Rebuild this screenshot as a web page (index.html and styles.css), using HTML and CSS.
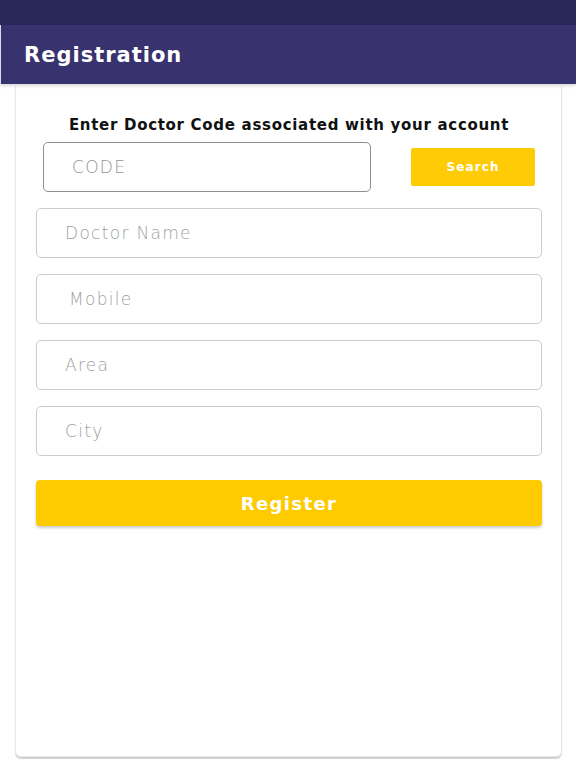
FILE: index.html
```html
<!DOCTYPE html>
<html>
<head>
<meta charset="utf-8">
<link rel="stylesheet" href="styles.css">
</head>
<body>
<div class="status"></div>
<header class="appbar"><h1>Registration</h1></header>
<main class="card">
  <p class="prompt">Enter Doctor Code associated with your account</p>
  <div class="code-row">
    <div class="field code">CODE</div>
    <button class="search">Search</button>
  </div>
  <div class="field wide">Doctor Name</div>
  <div class="field wide mobile">Mobile</div>
  <div class="field wide">Area</div>
  <div class="field wide">City</div>
  <button class="register">Register</button>
</main>
</body>
</html>
```
FILE: styles.css
```css
* { box-sizing: border-box; }
html, body { margin: 0; padding: 0; background: #fff; }
body {
  width: 576px;
  height: 768px;
  overflow: hidden;
  font-family: "DejaVu Sans", "Liberation Sans", sans-serif;
}
.status { height: 25px; background: #28285a; }
.appbar {
  height: 59px;
  background: #38336e;
  border-left: 1px solid #d8d8e8;
  display: flex;
  align-items: center;
  padding-left: 23px;
  box-shadow: 0 2px 3px rgba(0,0,0,0.15);
  position: relative;
}
.appbar h1 {
  margin: 0;
  color: #fff;
  font-size: 21px;
  font-weight: 700;
  letter-spacing: 1px;
}
.card {
  margin: 2px 14px 0 15px;
  height: 671px;
  border: 1px solid #e6e6e6;
  border-top: none;
  border-radius: 0 0 6px 6px;
  box-shadow: 0 2px 1px #cfcfcf;
  padding: 0 19px 0 20px;
  display: flex;
  flex-direction: column;
}
.prompt {
  margin: 30px 0 0;
  line-height: 18px;
  text-align: center;
  font-size: 15px;
  font-weight: 700;
  color: #111;
  letter-spacing: 0.7px;
}
.code-row {
  display: flex;
  align-items: center;
  margin: 8px 6px 0 7px;
  gap: 40px;
}
.field {
  height: 50px;
  border: 1px solid #cdcdcd;
  border-radius: 5px;
  display: flex;
  align-items: center;
  padding-left: 28px;
  font-size: 17px;
  font-weight: 300;
  color: #a0a0a0;
  letter-spacing: 1.3px;
  margin-top: 16px;
}
.field.code {
  width: 328px;
  margin-top: 0;
  border-color: #8f8f8f;
  color: #959595;
}
.field.mobile { padding-left: 32px; }
.search {
  width: 124px;
  height: 38px;
  border: none;
  border-radius: 2px;
  background: #ffcb05;
  color: #fff;
  font-family: inherit;
  font-size: 12px;
  font-weight: 700;
  letter-spacing: 1.1px;
}
.register {
  margin-top: 24px;
  height: 46px;
  border: none;
  border-radius: 4px;
  background: #fecb00;
  color: #fff;
  font-family: inherit;
  font-size: 18px;
  font-weight: 700;
  letter-spacing: 1.4px;
  box-shadow: 0 2px 3px rgba(0,0,0,0.2);
}
```
